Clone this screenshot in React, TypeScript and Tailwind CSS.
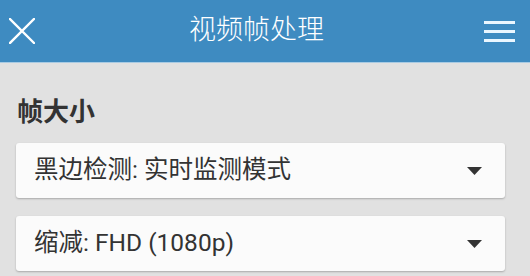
const FONT = "font-['Roboto','Noto_Sans_CJK_SC',sans-serif]";

function SelectRow({ label }: { label: string }) {
  return (
    <div className="flex h-[55px] items-center justify-between rounded-[3px] bg-[#fbfbfb] pl-[18px] pr-[23px] shadow-[0_1px_2px_rgba(0,0,0,0.25)]">
      <span className="text-[24.5px] leading-none text-[#333333]">{label}</span>
      <svg width="15" height="8" viewBox="0 0 15 8" className="text-[#333333]">
        <path d="M0 0 H15 L7.5 8 Z" fill="currentColor" />
      </svg>
    </div>
  );
}

export default function App() {
  return (
    <div className={`${FONT} min-h-[276px] w-[530px] bg-[#e1e1e1]`}>
      {/* Header */}
      <header className="flex h-[63px] items-center border-b border-[#a9cbe3] bg-[#3e8bc1] text-white">
        <button className="flex h-full w-[44px] items-center pl-[9px]">
          <svg width="26" height="26" viewBox="0 0 26 26">
            <path
              d="M1 1 L25 25 M25 1 L1 25"
              stroke="white"
              strokeWidth="2.4"
              strokeLinecap="square"
            />
          </svg>
        </button>
        <h1 className="flex-1 pb-[2px] text-center text-[27px] font-light leading-none">
          视频帧处理
        </h1>
        <button className="flex h-full items-center pr-[15px] pl-[15px]">
          <div className="flex w-[31px] flex-col gap-[6px]">
            <span className="h-[3px] bg-[#eaf6ff]" />
            <span className="h-[3px] bg-[#eaf6ff]" />
            <span className="h-[3px] bg-[#eaf6ff]" />
          </div>
        </button>
      </header>

      <main className="pl-[16px] pr-[25px] pt-[36px]">
        <h2 className="pl-[1px] text-[26px] font-bold leading-none text-[#333333]">帧大小</h2>
        <div className="mt-[18px] flex flex-col gap-[18px]">
          <SelectRow label="黑边检测: 实时监测模式" />
          <SelectRow label="缩减: FHD (1080p)" />
        </div>
      </main>
    </div>
  );
}
